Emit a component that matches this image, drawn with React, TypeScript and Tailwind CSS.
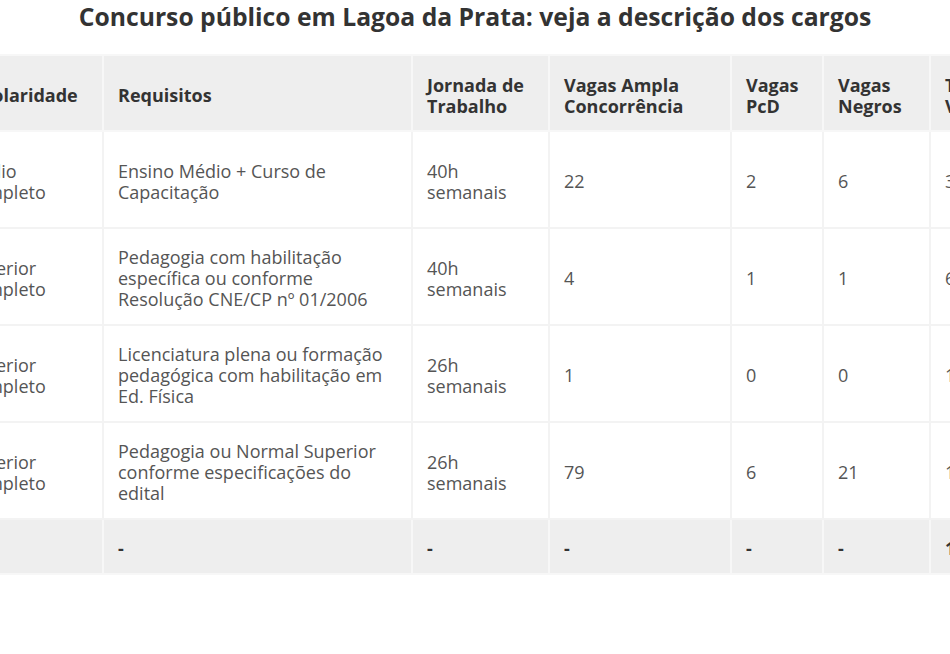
const headers = [
  "Escolaridade",
  "Requisitos",
  "Jornada de Trabalho",
  "Vagas Ampla Concorrência",
  "Vagas PcD",
  "Vagas Negros",
  "Total de Vagas",
];

const rows = [
  ["Médio Completo", "Ensino Médio + Curso de Capacitação", "40h semanais", "22", "2", "6", "30"],
  [
    "Superior Completo",
    "Pedagogia com habilitação específica ou conforme Resolução CNE/CP nº 01/2006",
    "40h semanais",
    "4",
    "1",
    "1",
    "6",
  ],
  [
    "Superior Completo",
    "Licenciatura plena ou formação pedagógica com habilitação em Ed. Física",
    "26h semanais",
    "1",
    "0",
    "0",
    "1",
  ],
  [
    "Superior Completo",
    "Pedagogia ou Normal Superior conforme especificações do edital",
    "26h semanais",
    "79",
    "6",
    "21",
    "106",
  ],
];

const widths = [154, 309, 137, 182, 92, 107, 130];

export default function App() {
  return (
    <div className="w-[950px] h-[654px] overflow-hidden bg-white font-['Open_Sans',sans-serif]">
      <h2 className="text-center text-[24.7px] leading-[32px] font-bold text-[#333] pt-[1px]">
        Concurso público em Lagoa da Prata: veja a descrição dos cargos
      </h2>
      <table className="mt-[21px] ml-[-52px] w-[1111px] table-fixed border-collapse text-[18px] leading-[21px]">
        <colgroup>
          {widths.map((w, i) => (
            <col key={i} style={{ width: w }} />
          ))}
        </colgroup>
        <thead>
          <tr className="bg-[#eeeeee]">
            {headers.map((h) => (
              <th
                key={h}
                className="h-[76px] border-2 border-[#f7f7f7] px-[14px] pt-[5px] text-left align-middle font-bold text-[#333]"
              >
                {h}
              </th>
            ))}
          </tr>
        </thead>
        <tbody>
          {rows.map((r, i) => (
            <tr key={i} className="bg-white">
              {r.map((c, j) => (
                <td
                  key={j}
                  className="h-[97px] border-2 border-[#f3f3f3] px-[14px] pt-[4px] align-middle text-[#555]"
                >
                  {c}
                </td>
              ))}
            </tr>
          ))}
          <tr className="bg-[#eeeeee]">
            {["Total", "-", "-", "-", "-", "-", "143"].map((c, j) => (
              <td
                key={j}
                className="h-[55px] border-2 border-[#f7f7f7] px-[14px] pt-[3px] align-middle font-bold text-[#333]"
              >
                {j === 0 ? "" : c}
              </td>
            ))}
          </tr>
        </tbody>
      </table>
    </div>
  );
}
